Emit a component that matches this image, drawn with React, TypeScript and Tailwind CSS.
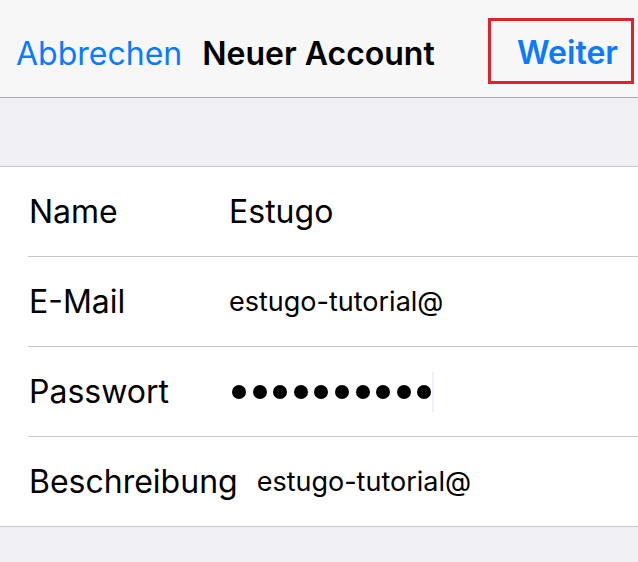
import React from "react";

const font = { fontFamily: "Inter, 'Noto Sans', sans-serif" };

function Row({ label, children, last }: { label: string; children: React.ReactNode; last?: boolean }) {
  return (
    <div className={last ? "border-b border-[#c8c7cc]" : ""}>
      <div className="flex items-center h-[89px] pl-[29px] gap-[19px]">
        <div className="min-w-[181px] text-[32px] text-black leading-none">{label}</div>
        <div className="flex items-center text-black leading-none">{children}</div>
      </div>
      {!last && <div className="ml-[28px] h-px bg-[#c8c7cc]" />}
    </div>
  );
}

export default function App() {
  return (
    <div className="w-[638px] h-[562px] bg-[#efeff4] overflow-hidden" style={font}>
      <div className="h-[98px] bg-[#f7f7f8] border-b border-[#a9a9ad] flex items-center">
        <div className="flex items-center pt-[10px]">
          <span className="ml-[16px] text-[32px] text-[#0a7aff] leading-none">Abbrechen</span>
          <span className="ml-[20px] text-[32px] font-semibold text-black leading-none">Neuer Account</span>
        </div>
        <div className="ml-auto mr-[4px] mt-[4px] w-[146px] h-[66px] border-[3px] border-[#e3202b] flex items-center justify-end pr-[13px] pt-[5px]">
          <span className="text-[32px] font-semibold text-[#0a7aff] leading-none">Weiter</span>
        </div>
      </div>
      <div className="h-[69px] border-b border-[#c8c7cc]" />
      <div className="bg-white">
        <Row label="Name">
          <span className="text-[32px]">Estugo</span>
        </Row>
        <Row label="E-Mail">
          <span className="text-[27px]">estugo-tutorial@</span>
        </Row>
        <Row label="Passwort">
          <div className="flex items-center gap-[6.6px] ml-[3px]">
            {Array.from({ length: 10 }).map((_, i) => (
              <div key={i} className="w-[14px] h-[14px] rounded-full bg-black" />
            ))}
            <div className="w-[2px] h-[40px] bg-[#edf1fb] -ml-[6px]" />
          </div>
        </Row>
        <Row label="Beschreibung" last>
          <span className="text-[27px]">estugo-tutorial@</span>
        </Row>
      </div>
    </div>
  );
}
